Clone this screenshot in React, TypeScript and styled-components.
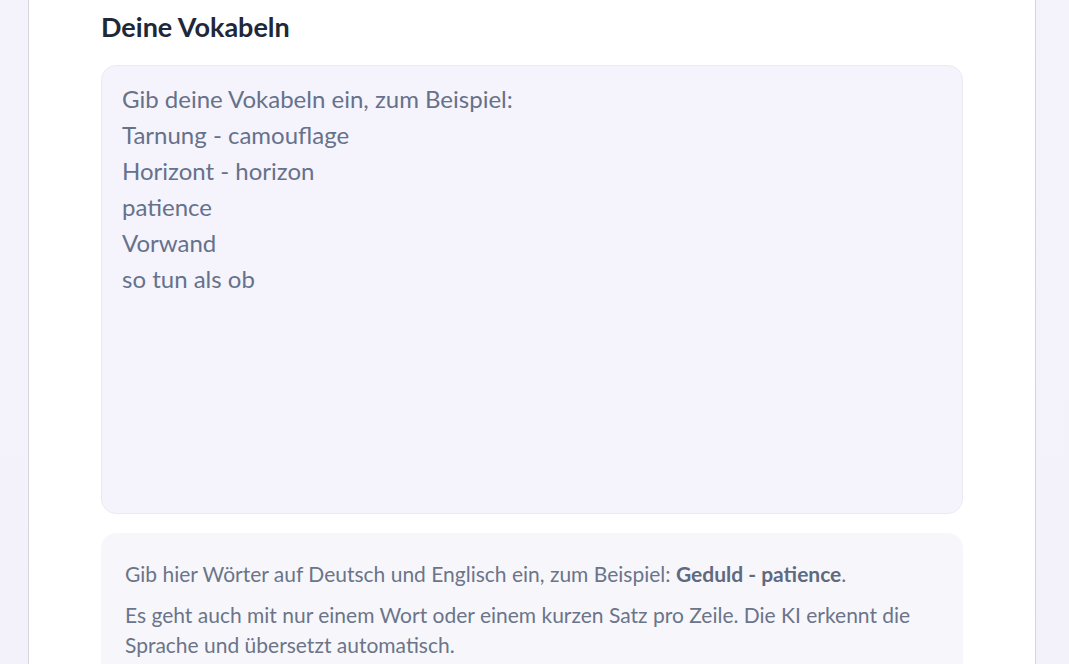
import React from "react";
import styled, { createGlobalStyle } from "styled-components";

const GlobalStyle = createGlobalStyle`
  html, body {
    margin: 0;
    padding: 0;
    background: linear-gradient(180deg, #f4f3fc 0%, #f3f2fb 100%);
    font-family: Lato, "Noto Sans", sans-serif;
    height: 100%;
    overflow: hidden;
  }
  * {
    box-sizing: border-box;
  }
`;

const placeholder = `Gib deine Vokabeln ein, zum Beispiel:
Tarnung - camouflage
Horizont - horizon
patience
Vorwand
so tun als ob`;

const App = () => {
  return (
    <>
      <GlobalStyle />
      <StyledPage>
        <StyledCard>
          <StyledHeading>Deine Vokabeln</StyledHeading>
          <StyledTextArea placeholder={placeholder} />
          <StyledInfo>
            <StyledInfoText>
              Gib hier Wörter auf Deutsch und Englisch ein, zum Beispiel:{" "}
              <strong>Geduld - patience</strong>.
            </StyledInfoText>
            <StyledInfoText>
              Es geht auch mit nur einem Wort oder einem kurzen Satz pro Zeile.
              Die KI erkennt die Sprache und übersetzt automatisch.
            </StyledInfoText>
          </StyledInfo>
        </StyledCard>
      </StyledPage>
    </>
  );
};

const StyledPage = styled.div`
  display: flex;
  padding-left: 28px;
  min-height: 100vh;
`;

const StyledCard = styled.div`
  width: 1008px;
  background-color: #ffffff;
  border-left: 1px solid #d4d5de;
  border-right: 1px solid #d4d5de;
  padding: 10px 72px 40px;
`;

const StyledHeading = styled.h2`
  margin: 0 0 21px;
  font-size: 27px;
  line-height: 34px;
  font-weight: 700;
  color: #1e2838;
`;

const StyledTextArea = styled.textarea`
  display: block;
  width: 100%;
  height: 449px;
  resize: none;
  padding: 15px 20px;
  border: 1px solid #ebeaf3;
  border-radius: 15px;
  background-color: #f5f4fd;
  font-family: inherit;
  font-size: 24px;
  line-height: 36px;
  color: #334155;
  outline: none;

  &::placeholder {
    color: #66718a;
    opacity: 1;
  }
`;

const StyledInfo = styled.div`
  margin-top: 19px;
  padding: 26px 24px 24px;
  border-radius: 15px;
  background-color: #f7f7fb;
`;

const StyledInfoText = styled.p`
  margin: 0 0 11px;
  font-size: 21px;
  line-height: 30px;
  color: #6b7489;

  strong {
    font-weight: 700;
    color: #5f6a80;
  }
`;

export default App;
